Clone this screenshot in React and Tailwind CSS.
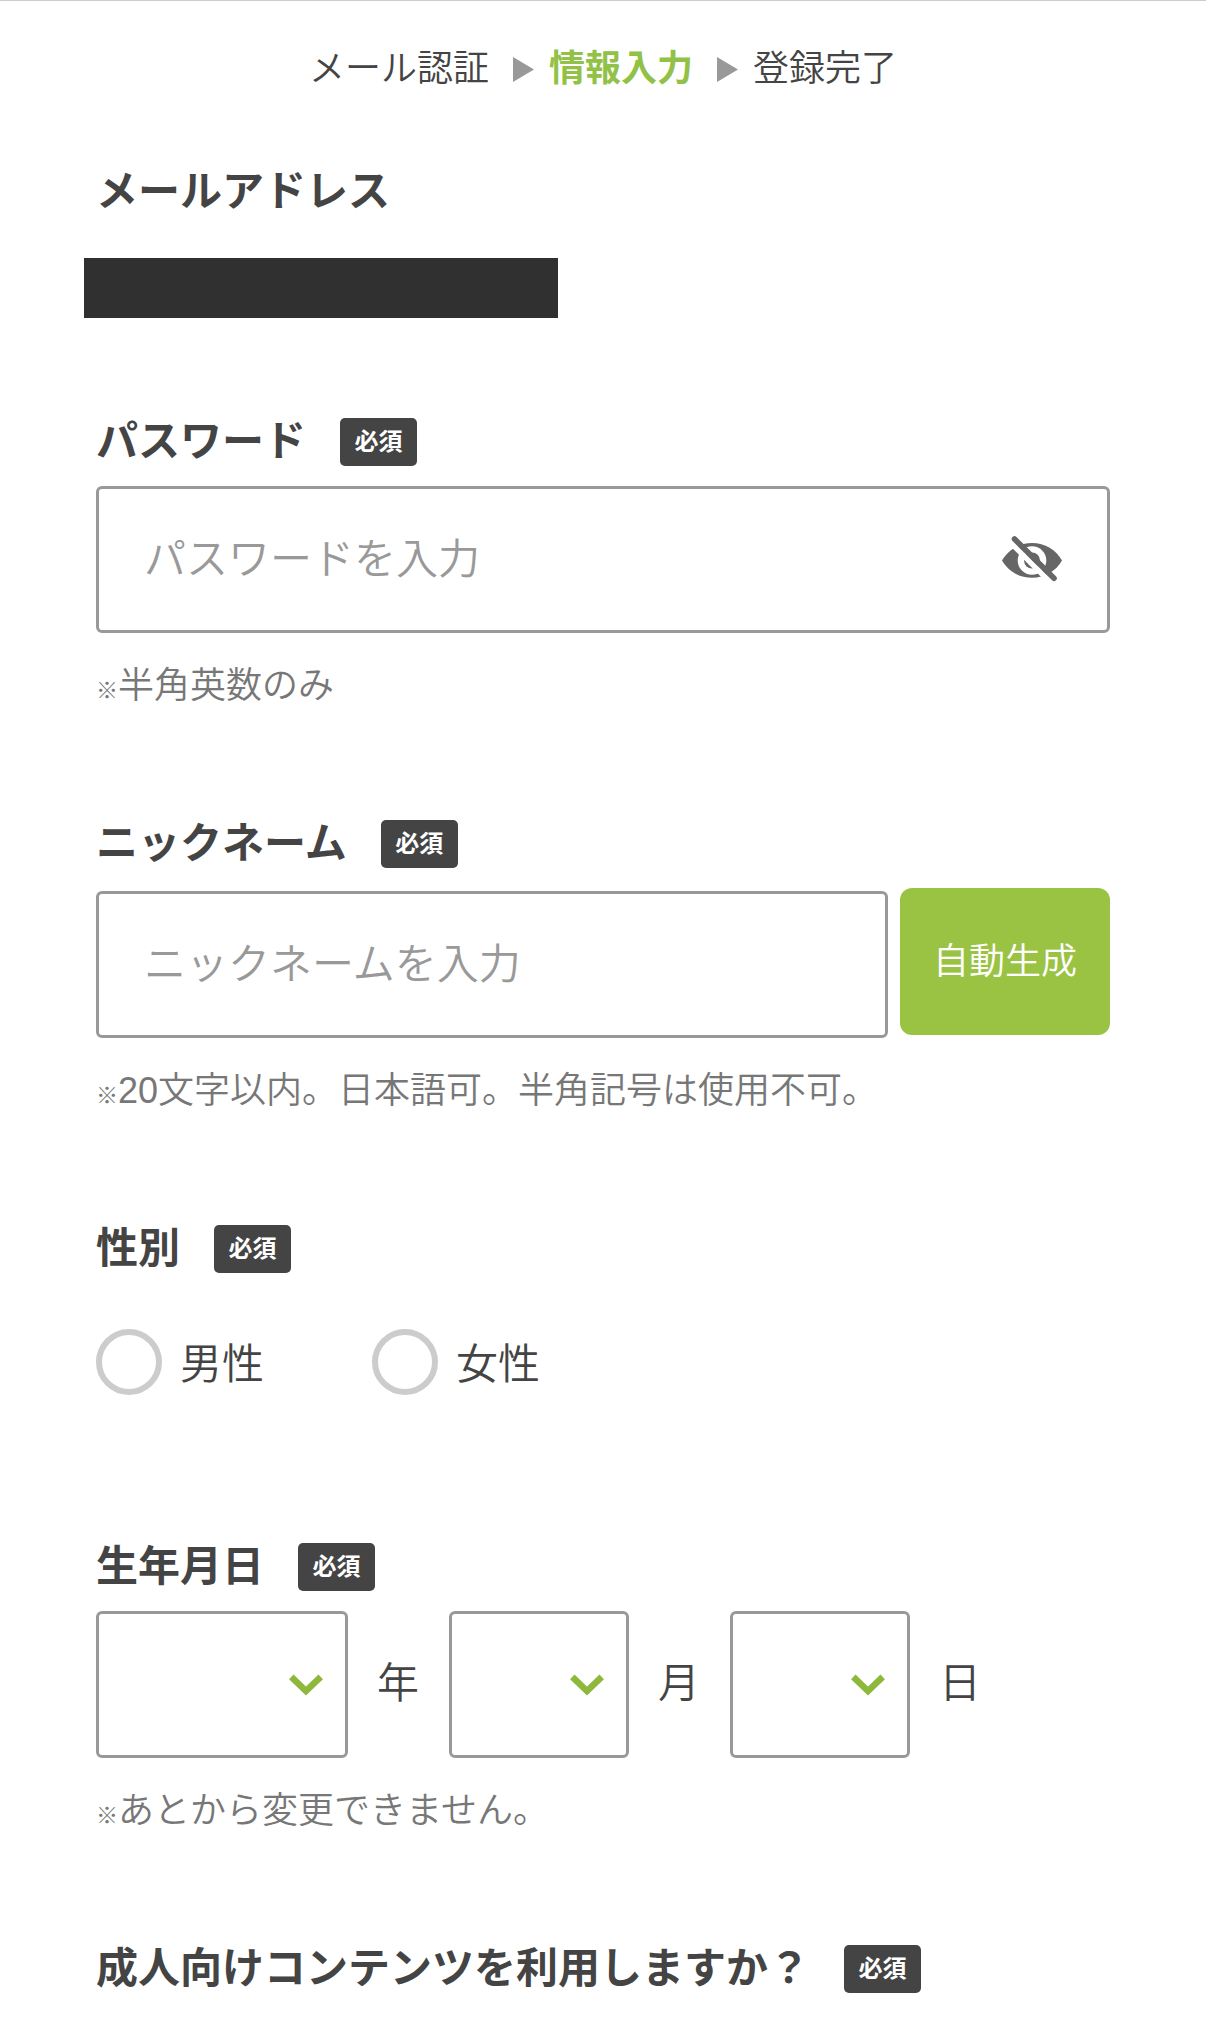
import { useState } from "react";

const years = Array.from({ length: 100 }, (_, i) => 2024 - i);
const months = Array.from({ length: 12 }, (_, i) => i + 1);
const days = Array.from({ length: 31 }, (_, i) => i + 1);

const inputClass =
  "h-[147px] w-full min-w-0 rounded-md border-3 border-[#999] bg-white px-[45px] text-[42px] text-[#444] outline-none placeholder:text-[#999]";

function Required() {
  return (
    <span className="flex h-12 w-[77px] items-center justify-center rounded-[5px] bg-[#444] text-2xl font-bold text-white">
      必須
    </span>
  );
}

function Heading({ as: Tag = "h2", required, children, ...props }) {
  return (
    <div className="flex h-12 items-center gap-[34px]">
      <Tag className="text-[42px] leading-12 font-bold" {...props}>
        {children}
      </Tag>
      {required && <Required />}
    </div>
  );
}

function Hint({ children }) {
  return (
    <p className="mt-[26px] text-4xl leading-[54px] text-[#777]">
      <span className="text-[22px] leading-none font-bold">※</span>
      {children}
    </p>
  );
}

function Arrow() {
  return (
    <svg viewBox="0 0 21 25" className="mr-[15px] ml-6 h-[25px] w-[21px]" fill="#999" aria-hidden="true">
      <path d="M0 0L21 12.5L0 25Z" />
    </svg>
  );
}

function EyeOff() {
  return (
    <svg viewBox="0 0 60 46" className="h-[46px] w-[60px]" aria-hidden="true">
      <mask id="eye-cut" maskUnits="userSpaceOnUse" x="0" y="0" width="60" height="46">
        <rect width="60" height="46" fill="#fff" />
        <circle cx="30" cy="24.5" r="14.3" fill="#000" />
        <circle cx="30" cy="24.5" r="8" fill="#fff" />
        <path d="M2 0L52 50" stroke="#000" strokeWidth="5.4" />
      </mask>
      <path
        d="M0 24.5C6 14 17 7 30 7S54 14 60 24.5C54 35 43 41.8 30 41.8S6 35 0 24.5Z"
        fill="#666"
        mask="url(#eye-cut)"
      />
      <path d="M12.5 3L52 42.3" stroke="#666" strokeWidth="5.6" strokeLinecap="round" />
    </svg>
  );
}

function DateSelect({ id, unit, options, className }) {
  return (
    <>
      <div className={`relative ${className}`}>
        <select
          id={id}
          defaultValue=""
          className="h-[147px] w-full appearance-none rounded-md border-3 border-[#999] bg-white pl-6 text-[42px] outline-none"
        >
          <option value=""></option>
          {options.map((o) => (
            <option key={o} value={o}>
              {o}
            </option>
          ))}
        </select>
        <svg
          viewBox="0 0 34 22"
          className="pointer-events-none absolute top-1/2 right-[25px] h-[22px] w-[34px] -translate-y-1/2"
          fill="none"
          stroke="#8db83c"
          strokeWidth="6.5"
          aria-hidden="true"
        >
          <path d="M2.3 2.8L17 17L31.7 2.8" />
        </svg>
      </div>
      <label htmlFor={id} className="mr-[30px] ml-[29px] pb-0.5 text-[42px] leading-[60px]">
        {unit}
      </label>
    </>
  );
}

function GenderOption({ value, label }) {
  return (
    <label className="flex items-center gap-[18px] text-[42px] leading-[60px]">
      <input
        type="radio"
        name="gender"
        value={value}
        className="size-[66px] appearance-none rounded-full border-6 border-[#ccc] bg-white checked:border-[#99c444]"
      />
      <span className="pt-1.5">{label}</span>
    </label>
  );
}

export default function App() {
  const [visible, setVisible] = useState(false);

  return (
    <div className="border-t border-[#ccc] bg-white font-['Liberation_Sans','Noto_Sans_CJK_JP',sans-serif] font-[350] text-[#444]">
      <ol className="flex items-center justify-center pt-[41px] text-4xl leading-[54px]">
        <li>メール認証</li>
        <li className="flex items-center font-bold text-[#91c146]" aria-current="step">
          <Arrow />
          情報入力
        </li>
        <li className="flex items-center">
          <Arrow />
          登録完了
        </li>
      </ol>

      <form className="px-24 pt-[72px] pb-[35px]" onSubmit={(e) => e.preventDefault()}>
        <section className="mb-[100px]">
          <Heading>メールアドレス</Heading>
          <div className="mt-[42px] -ml-3 h-[60px] w-[474px] bg-[#303030]" />
        </section>

        <section className="mb-[107px]">
          <Heading as="label" htmlFor="password" required>
            パスワード
          </Heading>
          <div className="relative mt-5">
            <input
              id="password"
              type={visible ? "text" : "password"}
              placeholder="パスワードを入力"
              className={inputClass}
            />
            <button
              type="button"
              aria-label="パスワードを表示"
              aria-pressed={visible}
              onClick={() => setVisible(!visible)}
              className="absolute inset-y-0 right-12 flex items-center pb-0.5"
            >
              <EyeOff />
            </button>
          </div>
          <Hint>半角英数のみ</Hint>
        </section>

        <section className="mb-[107px]">
          <Heading as="label" htmlFor="nickname" required>
            ニックネーム
          </Heading>
          <div className="mt-5 flex items-start gap-3">
            <div className="min-w-0 flex-1 pt-[3px]">
              <input id="nickname" type="text" placeholder="ニックネームを入力" className={inputClass} />
            </div>
            <button
              type="button"
              className="h-[147px] w-[210px] shrink-0 rounded-xl bg-[#9ac343] text-4xl text-white"
            >
              自動生成
            </button>
          </div>
          <Hint>20文字以内。日本語可。半角記号は使用不可。</Hint>
        </section>

        <section className="mb-37" role="radiogroup" aria-labelledby="gender-label">
          <Heading id="gender-label" required>
            性別
          </Heading>
          <div className="mt-14 flex gap-27">
            <GenderOption value="male" label="男性" />
            <GenderOption value="female" label="女性" />
          </div>
        </section>

        <section className="mb-[107px]" role="group" aria-labelledby="birthday-label">
          <Heading id="birthday-label" required>
            生年月日
          </Heading>
          <div className="mt-5 flex items-center">
            <DateSelect id="year" unit="年" options={years} className="w-[252px]" />
            <DateSelect id="month" unit="月" options={months} className="w-[180px]" />
            <DateSelect id="day" unit="日" options={days} className="w-[180px]" />
          </div>
          <Hint>あとから変更できません。</Hint>
        </section>

        <section>
          <Heading required>成人向けコンテンツを利用しますか？</Heading>
        </section>
      </form>
    </div>
  );
}
